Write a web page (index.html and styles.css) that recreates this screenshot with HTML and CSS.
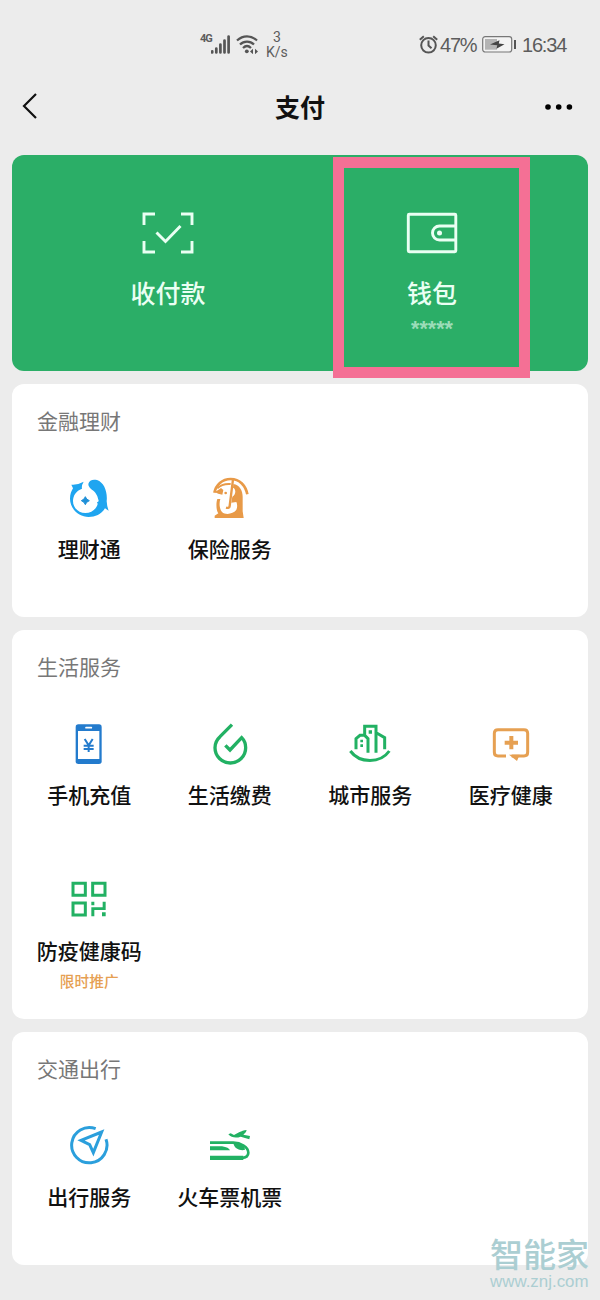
FILE: index.html
```html
<!DOCTYPE html>
<html lang="zh-CN">
<head>
<meta charset="utf-8">
<title>支付</title>
<link rel="stylesheet" href="styles.css">
</head>
<body>
<div class="statusbar">
  <div class="network">
    <span class="gen">4G</span>
    <svg width="19" height="19" viewBox="0 0 19 19"><path d="M1.200 16.300v1.200M5.300 13.500v4M9.400 9.500v8M13.500 5.500v12M17.600 1.500v16" fill="none" stroke="#555" stroke-width="2.700" stroke-linecap="round"/></svg>
    <svg class="wifi" width="22" height="19" viewBox="0 0 22 19"><path d="M1 5.500C7 0 15 0 21 5.500M4 9.500C8 5.600 14 5.600 18 9.500M7 13C9.500 10.600 12.500 10.600 15 13" fill="none" stroke="#555" stroke-width="2.300"/><circle cx="10.800" cy="16.300" r="1.900" fill="#555"/><path d="M14 16.500l3-2.700v5.400zM22 16.500l-3-2.700v5.400z" fill="#555"/></svg>
    <span class="speed"><span>3</span><span>K/s</span></span>
  </div>
  <div class="power">
    <svg width="19" height="19" viewBox="0 0 19 19"><g fill="none" stroke="#555" stroke-width="2"><circle cx="9.500" cy="10.300" r="7.300"/><path d="M9.500 5.500v5l3 2.800M.8 4.700l4-3.500M18.200 4.700l-4-3.500"/></g></svg>
    <span class="pct">47%</span>
    <svg class="battery" width="35" height="17" viewBox="0 0 35 17"><rect x=".7" y=".7" width="29" height="15.300" rx="2.500" fill="#f3f3f3" stroke="#777" stroke-width="1.200"/><path d="M3 3h12v10.700H3z" fill="#b4b4b4"/><path d="M8 8.500l9.500-4.200-.7 3.200 5.700.7-8 4.500.7-3.500z" fill="#444"/><path d="M33 4v9" stroke="#555" stroke-width="2"/></svg>
    <span class="clock">16:34</span>
  </div>
</div>
<header class="navbar">
  <svg width="16" height="28" viewBox="0 0 16 28"><path d="M14 2L2 14l12 12" fill="none" stroke="#111" stroke-width="2.200"/></svg>
  <h1>支付</h1>
  <svg width="28" height="6" viewBox="0 0 28 6"><circle cx="3" cy="3" r="2.800"/><circle cx="13.700" cy="3" r="2.800"/><circle cx="24.400" cy="3" r="2.800"/></svg>
</header>
<main>
  <section class="hero">
    <div class="action">
      <svg width="52" height="42" viewBox="0 0 52 42"><path d="M2 13V2h11M39 2h11v11M50 29v11H39M13 40H2V29M14.500 20.500l9 9L38.500 14" fill="none" stroke="#eafff3" stroke-width="2.900"/></svg>
      <span class="action-name">收付款</span>
    </div>
    <div class="action">
      <svg width="52" height="42" viewBox="0 0 52 42"><g fill="none" stroke="#eafff3" stroke-width="2.900"><rect x="2.300" y="2.300" width="47.500" height="37.500" rx="1"/><path d="M49 14H33.500a7 7 0 0 0 0 14H49"/></g><circle cx="33.500" cy="21" r="2.500" fill="#eafff3"/></svg>
      <span class="action-name">钱包</span>
      <span class="balance">*****</span>
    </div>
    <div class="highlight"></div>
  </section>

  <section class="card">
    <h2>金融理财</h2>
    <div class="grid">
      <div class="item">
        <svg class="icon" viewBox="0 0 132 132"><path fill="#1fa5f0" d="M13 26Q30 28 50 17Q43 28 45 38C27 44 18 59 18 75C18 96 35 111 55 111C73 111 88 100 92 84L90 78Q94 79 95 74Q93 60 85 50C77 41 64 36 64 24C66 12 78 9 90 12C112 20 122 48 119 76Q120 92 125 104L114 97C102 116 85 123 65 123C35 123 9 98 9 68C9 55 13 45 18 37Z"/><path fill="#1f90d8" d="M55 62l4 7 8 5-8 5-4 7-4-7-8-5 8-5z" stroke="#1f90d8" stroke-width="3"/></svg>
        <span class="name">理财通</span>
      </div>
      <div class="item">
        <svg class="icon" viewBox="0 0 132 132"><path d="M19 50C24 27 42 9 68 9C96 9 113 30 118 55" fill="none" stroke="#e89a48" stroke-width="8"/><path d="M75 10L65 90Q64 98 54 95" fill="none" stroke="#e89a48" stroke-width="7"/><path d="M28 37Q42 22 68 24" fill="none" stroke="#e89a48" stroke-width="6"/><path fill="#e89a48" d="M76 24C95 27 104 44 104 62V106L107 126H20V119L31 112C24 104 24 80 28 69H37C33 82 34 98 42 108C54 119 76 113 84 103C89 95 88 84 85 78L70 80L73 62C84 58 85 38 75 35ZM20 48Q34 40 39 36L46 42L43 56Q30 54 20 48Z"/><circle cx="53" cy="51" r="4" fill="#e89a48"/></svg>
        <span class="name">保险服务</span>
      </div>
    </div>
  </section>

  <section class="card">
    <h2>生活服务</h2>
    <div class="grid">
      <div class="item">
        <svg class="icon" viewBox="0 0 132 132"><rect x="26" y="7" width="78" height="119" rx="8" fill="#237bcd"/><path d="M33 27h64v84H33z" fill="#fff"/><path d="M57 17h16" stroke="#fff" stroke-width="5" stroke-linecap="round"/><path d="M53 51l12 19 12-19M65 70v20M50 71h30M50 81h30" fill="none" stroke="#237bcd" stroke-width="6"/></svg>
        <span class="name">手机充值</span>
      </div>
      <div class="item">
        <svg class="icon" viewBox="0 0 132 132"><path d="M72 8L36 44C25 54 21 65 21 77A46 46 0 0 0 113 77C113 64 108 54 101 47L66 84L52 70" fill="none" stroke="#22b163" stroke-width="10"/></svg>
        <span class="name">生活缴费</span>
      </div>
      <div class="item">
        <svg class="icon" viewBox="0 0 132 132"><path d="M24 82V50L36 40H50L60 50V92M50 40V13H84V92M86 33L110 47V82M7 87C35 125 97 125 124 87" fill="none" stroke="#22b163" stroke-width="9"/><path d="M62 25h10v10h-10zM37 53h8v8h-8zM37 67h8v8h-8z" fill="#22b163"/></svg>
        <span class="name">城市服务</span>
      </div>
      <div class="item">
        <svg class="icon" viewBox="0 0 132 132"><path d="M51 102H27Q16 102 16 91V34Q16 23 27 23H105Q116 23 116 34V91Q116 102 105 102H68" fill="none" stroke="#e6a052" stroke-width="9"/><path d="M60 98H92L84 117ZM61 42h12v14h14v12H73v14H61V68H47V56h14z" fill="#e6a052"/></svg>
        <span class="name">医疗健康</span>
      </div>
      <div class="item">
        <svg class="icon" viewBox="0 0 132 132"><path d="M18 16h37v36H18zM77 16h37v36H77zM18 75h37v36H18z" fill="none" stroke="#22b163" stroke-width="9"/><path d="M73 71h9v11h-9zM107 71h9v25H82V115H73V88H107zM105 103h11v12h-11z" fill="#22b163"/></svg>
        <span class="name">防疫健康码</span>
        <span class="promo">限时推广</span>
      </div>
    </div>
  </section>

  <section class="card">
    <h2>交通出行</h2>
    <div class="grid">
      <div class="item">
        <svg class="icon" viewBox="0 0 132 132"><path d="M86 14A53 53 0 1 0 117 46" fill="none" stroke="#2b9fdc" stroke-width="9"/><path d="M104 24L42 49L68 62L79 86Z" fill="none" stroke="#2b9fdc" stroke-width="9"/></svg>
        <span class="name">出行服务</span>
      </div>
      <div class="item">
        <svg class="icon" viewBox="0 0 132 132"><path d="M6 56H76C98 56 121 70 121 86C121 96 112 101 101 102" fill="none" stroke="#22b163" stroke-width="8"/><path d="M6 67H42C56 69 64 73 66 79H6ZM6 95H106V108H6ZM76 58L94 59C108 65 113 74 110 78C96 80 80 76 76 58ZM61 31L68 28L78 33C90 28 98 20 116 18Q116 25 106 32L126 36L124 46L98 38C84 43 70 41 61 31Z" fill="#22b163"/></svg>
        <span class="name">火车票机票</span>
      </div>
    </div>
  </section>
</main>
<div class="watermark"><span class="mark-name">智能家</span><span class="mark-url">www.znj.com</span></div>
</body>
</html>
```
FILE: styles.css
```css
* { box-sizing: border-box; }
body {
  position: relative;
  margin: 0;
  height: 1300px;
  overflow: hidden;
  background: #ececec;
  color: #111;
  font-family: "Noto Sans CJK SC", sans-serif;
}
svg { display: block; flex: none; }
h1, h2 { margin: 0; }
.statusbar {
  display: flex;
  justify-content: space-between;
  height: 76px;
  padding: 26px 33px 0 200px;
  color: #5c5c5c;
  font-family: Roboto, sans-serif;
}
.network, .power { display: flex; align-items: center; height: 37px; }
.gen { width: 11px; margin-top: -11px; font-size: 11px; font-weight: 700; letter-spacing: -1px; line-height: 12px; }
.wifi { margin-left: 6px; }
.speed { display: flex; flex-direction: column; align-items: center; margin-left: 8px; font-size: 14px; line-height: 15px; }
.pct { width: 37px; margin-left: 2px; font-family: "Liberation Sans", sans-serif; font-size: 20px; letter-spacing: -1.200px; }
.battery { margin-left: 5px; }
.clock { width: 45px; margin-left: 5px; font-family: "Liberation Sans", sans-serif; font-size: 20px; letter-spacing: -1.200px; white-space: nowrap; }
.pct, .clock { padding-top: 1px; }
.navbar {
  display: grid;
  grid-template-columns: 1fr auto 1fr;
  align-items: center;
  height: 60px;
  padding: 0 27px 0 22px;
}
.navbar h1 { padding-left: 5px; font-size: 25px; line-height: 36px; font-weight: 700; }
.navbar svg:last-child { justify-self: end; margin-top: 1px; }
main { display: flex; flex-direction: column; gap: 13px; padding: 19px 12px 0; }
.hero {
  position: relative;
  display: grid;
  grid-template-columns: 1fr 1fr;
  height: 216px;
  padding: 57px 24px 0;
  border-radius: 12px;
  background: #2bae67;
  color: #eafff3;
}
.action { display: flex; flex-direction: column; align-items: center; }
.action-name { margin-top: 20px; font-size: 25px; line-height: 36px; font-weight: 500; }
.balance { margin-top: 7px; color: #9bdcb8; font-family: "Liberation Sans", sans-serif; font-size: 21.500px; font-weight: 700; line-height: 24px; }
.highlight {
  position: absolute;
  left: 321px;
  top: 2px;
  width: 197px;
  height: 221px;
  border: 11px solid #f47095;
}
.card { padding: 0 7px 3px; border-radius: 12px; background: #fff; }
.card h2 {
  height: 74px;
  padding: 22px 18px 0;
  color: #777;
  font-size: 21px;
  line-height: 28px;
  font-weight: 400;
}
.grid { display: grid; grid-template-columns: repeat(4, 1fr); grid-auto-rows: 156px; }
.item { display: flex; flex-direction: column; align-items: center; padding-top: 18px; }
.icon { width: 44px; height: 44px; }
.name { margin-top: 14px; font-size: 21px; line-height: 28px; font-weight: 500; white-space: nowrap; }
.promo { margin-top: 7px; color: #e6a052; font-size: 14.700px; line-height: 20px; font-weight: 500; }
.watermark {
  position: absolute;
  left: 490px;
  top: 1231px;
  display: flex;
  flex-direction: column;
  color: #abced2;
}
.mark-name { font-size: 33px; line-height: 44px; font-weight: 500; }
.mark-url { padding-top: 1px; font-family: "Liberation Sans", sans-serif; font-size: 16.900px; line-height: 12px; }
```
